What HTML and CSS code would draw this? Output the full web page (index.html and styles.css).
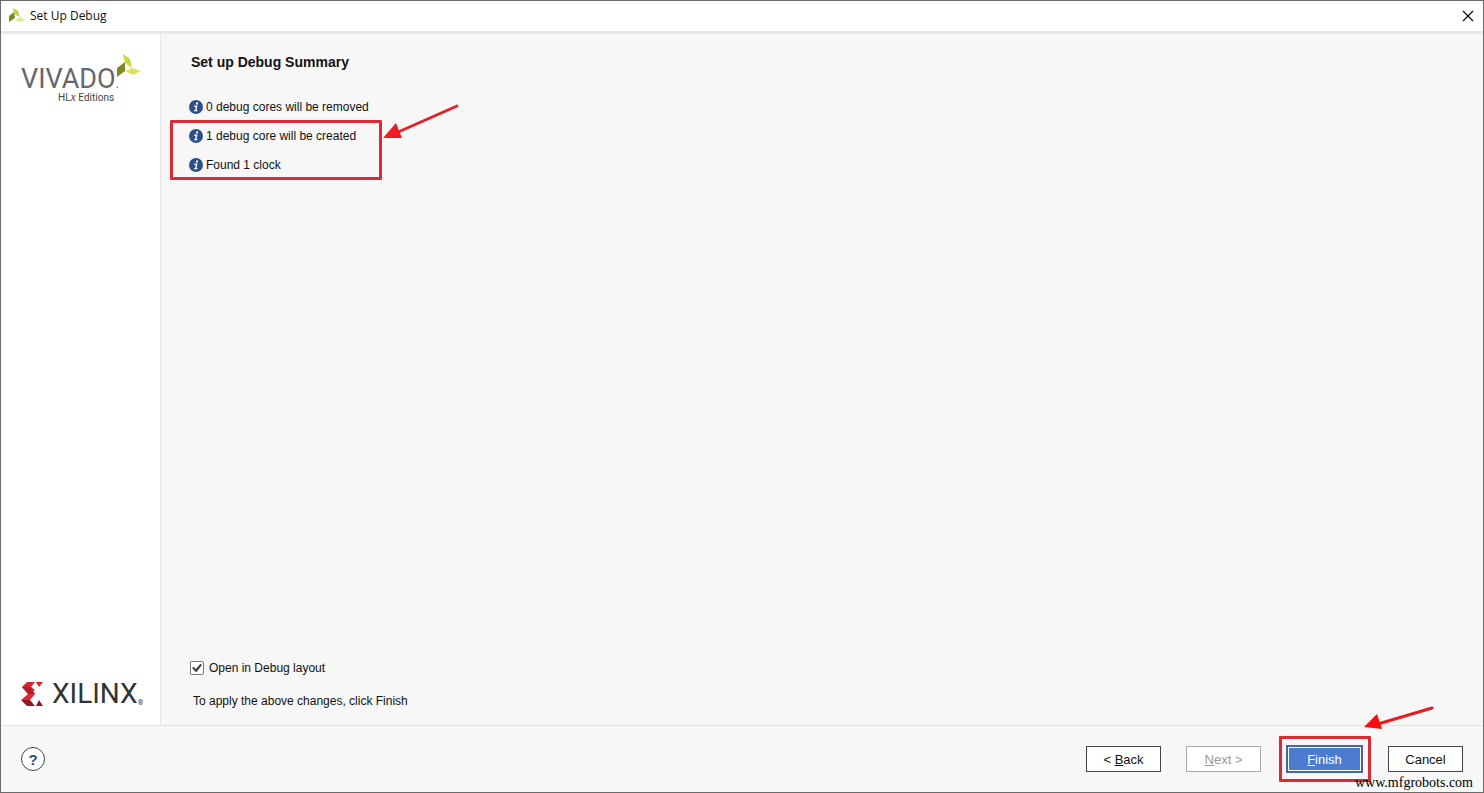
FILE: index.html
```html
<!DOCTYPE html>
<html lang="en">
<head>
    <meta charset="UTF-8">
    <meta name="viewport" content="width=device-width, initial-scale=1.0">
    <title>Set Up Debug</title>
    <link rel="stylesheet" href="styles.css">
</head>
<body>
    <header class="titlebar">
        <svg class="app-icon" viewBox="0 0 17 16">
            <path d="M1 8 L6 4 L7 10 L1 14 Z" fill="#7c8a1c"/>
            <path d="M5 0 L10 3 L12 9 L6 6 Z" fill="#c2d046"/>
            <path d="M7 12 L12 9 L17 12 L12 14 Z" fill="#e2e894"/>
        </svg>
        <span class="title">Set Up Debug</span>
        <button class="close" aria-label="Close">
            <svg viewBox="0 0 12 12"><path d="M1 1 L11 11 M11 1 L1 11" stroke="#111" stroke-width="1.3"/></svg>
        </button>
    </header>

    <div class="main">
        <aside class="sidebar">
            <div class="vivado">
                <div class="vivado-name">VIVADO<small>.</small></div>
                <div class="edition">HL<i>x</i> Editions</div>
                <svg class="leaves" viewBox="0 0 24 24">
                    <path d="M0 14 L8 8 L8 17 L0 23 Z" fill="#7f8b22"/>
                    <path d="M6 0 L13 5 L15 14 L8 9 Z" fill="#c9d63f"/>
                    <path d="M8 17 L16 14 L24 17 L16 21 Z" fill="#dbe45c"/>
                </svg>
            </div>
            <div class="xilinx">
                <svg class="xilinx-mark" viewBox="0 0 22 24">
                    <path d="M6 0 H14 L10 5 L14 8 L7 12 L1 5 Z" fill="#d8232f"/>
                    <path d="M15 0 H22 L18 5 Z" fill="#d8232f"/>
                    <path d="M1 5 H10 L14 12 H7 Z" fill="#b51f2a"/>
                    <path d="M7 12 H14 L9 18 L0 18 Z" fill="#df2935"/>
                    <path d="M0 18 L9 18 L14 24 H6 Z" fill="#8e1b22"/>
                    <path d="M18 18 L22 24 H15 Z" fill="#8e1b22"/>
                </svg>
                <span class="xilinx-name">XILINX</span><span class="reg">®</span>
            </div>
        </aside>

        <main class="content">
            <h1>Set up Debug Summary</h1>
            <ul class="summary">
                <li><svg class="info" viewBox="0 0 14 14"><circle cx="7" cy="7" r="7" fill="#2d4f86"/><path d="M7.2 2.6h2l-.4 1.8h-2z M5.3 5.5h3.2l-1 4.5h1l-.3 1.2H5l.3-1.2h.8l.7-3.3H5z" fill="#fff"/></svg>0 debug cores will be removed</li>
                <li class="marked"><svg class="info" viewBox="0 0 14 14"><circle cx="7" cy="7" r="7" fill="#2d4f86"/><path d="M7.2 2.6h2l-.4 1.8h-2z M5.3 5.5h3.2l-1 4.5h1l-.3 1.2H5l.3-1.2h.8l.7-3.3H5z" fill="#fff"/></svg>1 debug core will be created
                    <span class="box box-list"></span>
                    <svg class="arrow arrow-list" viewBox="0 0 78 38"><path d="M75 3 L14 30" stroke="#e0222b" stroke-width="3" stroke-linecap="round"/><path d="M1 35 L14 20 L20 35 Z" fill="#f01c24"/></svg>
                </li>
                <li><svg class="info" viewBox="0 0 14 14"><circle cx="7" cy="7" r="7" fill="#2d4f86"/><path d="M7.2 2.6h2l-.4 1.8h-2z M5.3 5.5h3.2l-1 4.5h1l-.3 1.2H5l.3-1.2h.8l.7-3.3H5z" fill="#fff"/></svg>Found 1 clock</li>
            </ul>
            <div class="bottom">
                <label class="option"><input type="checkbox" checked>Open in Debug layout</label>
                <p>To apply the above changes, click Finish</p>
            </div>
        </main>
    </div>

    <footer class="footer">
        <button class="help">?</button>
        <div class="buttons">
            <button class="btn">&lt; <u>B</u>ack</button>
            <button class="btn" disabled><u>N</u>ext &gt;</button>
            <div class="marked">
                <button class="btn primary"><u>F</u>inish</button>
                <span class="box box-finish"></span>
                <svg class="arrow arrow-finish" viewBox="0 0 72 28"><path d="M69 3 L15 19" stroke="#e81c20" stroke-width="3" stroke-linecap="round"/><path d="M1 22 L14 9 L19 24 Z" fill="#fb0d0d"/></svg>
            </div>
            <button class="btn">Cancel</button>
        </div>
        <span class="watermark">www.mfgrobots.com</span>
    </footer>
</body>
</html>
```
FILE: styles.css
```css
* {
    box-sizing: border-box;
}

body {
    margin: 0;
    height: 100vh;
    display: flex;
    flex-direction: column;
    border: 1px solid #6b6b6b;
    background-color: #f7f7f7;
    color: #111;
    font-family: "Liberation Sans", Arial, sans-serif;
    font-size: 12px;
    line-height: 16px;
    overflow: hidden;
}

button {
    font-family: inherit;
    font-size: 13px;
    padding: 0;
}

/* Title bar */
.titlebar {
    display: flex;
    align-items: center;
    height: 33px;
    padding: 0 8px 1px 7px;
    background-color: #fff;
    border-bottom: 3px solid #e8e8e8;
}

.app-icon {
    width: 17px;
    height: 16px;
    margin-right: 5px;
}

.title {
    flex: 1;
    font-family: "Open Sans", sans-serif;
    font-size: 12px;
}

.close {
    width: 14px;
    height: 14px;
    border: none;
    background: none;
    line-height: 0;
}

.close svg {
    width: 12px;
    height: 12px;
}

/* Main area */
.main {
    flex: 1;
    display: flex;
}

.sidebar {
    width: 160px;
    display: flex;
    flex-direction: column;
    justify-content: space-between;
    padding: 33px 16px 16px 20px;
    background-color: #fff;
    border-right: 1px solid #e8e8e8;
}

.vivado {
    position: relative;
    color: #66676a;
    font-family: Roboto, sans-serif;
}

.vivado-name {
    font-size: 27px;
    line-height: 25px;
}

.vivado-name small {
    font-size: 12px;
    line-height: 0;
}

.edition {
    padding-left: 37px;
    font-size: 10px;
    line-height: 12px;
    color: #444;
}

.edition i {
    font-family: "Liberation Serif", serif;
    font-size: 12px;
    line-height: 0;
}

.leaves {
    position: absolute;
    top: -13px;
    left: 96px;
    width: 24px;
    height: 24px;
}

.xilinx {
    display: flex;
    align-items: center;
    color: #333;
    font-family: Roboto, sans-serif;
}

.xilinx-mark {
    width: 22px;
    height: 24px;
    margin-right: 9px;
}

.xilinx-name {
    font-size: 28px;
    line-height: 30px;
}

.reg {
    align-self: flex-end;
    font-size: 7px;
    line-height: 12px;
}

.content {
    flex: 1;
    display: flex;
    flex-direction: column;
    padding: 20px 28px 16px;
}

h1 {
    margin: 0 0 29px 2px;
    font-size: 14px;
    line-height: 16px;
}

.summary {
    list-style-type: none;
    margin: 0;
    padding: 0;
}

.summary li {
    display: flex;
    align-items: center;
    gap: 3px;
    margin-bottom: 13px;
}

.info {
    width: 14px;
    height: 14px;
}

.bottom {
    margin-top: auto;
}

.option {
    display: flex;
    align-items: center;
    gap: 5px;
    margin-left: 1px;
}

.option input {
    appearance: none;
    width: 14px;
    height: 14px;
    margin: 0;
    border: 1px solid #777;
    border-radius: 2px;
    background-color: #fff;
}

.option input:checked {
    display: grid;
    place-items: center;
}

.option input:checked::before {
    content: "";
    width: 10px;
    height: 9px;
    background-color: #444;
    clip-path: polygon(0 50%, 18% 36%, 38% 62%, 84% 4%, 100% 18%, 42% 100%);
}

.bottom p {
    margin: 17px 0 0 4px;
}

/* Red marks */
.marked {
    position: relative;
}

.box {
    position: absolute;
    border: 3px solid #dc2a35;
    border-radius: 1px;
    pointer-events: none;
}

.box-list {
    top: -8px;
    left: -19px;
    width: 212px;
    height: 60px;
}

.box-finish {
    top: -9px;
    left: -7px;
    width: 92px;
    height: 46px;
}

.arrow {
    position: absolute;
}

.arrow-list {
    top: -25px;
    left: 193px;
    width: 78px;
    height: 38px;
}

.arrow-finish {
    top: -40px;
    left: 77px;
    width: 72px;
    height: 28px;
}

/* Footer */
.footer {
    position: relative;
    display: flex;
    align-items: center;
    justify-content: space-between;
    height: 67px;
    padding: 0 20px;
    border-top: 1px solid #e2e2e2;
}

.help {
    width: 24px;
    height: 24px;
    border: 1px solid #444;
    border-radius: 50%;
    background-color: #fff;
    color: #2d4f86;
    font-size: 15px;
    font-weight: bold;
}

.buttons {
    display: flex;
    align-items: center;
    gap: 25px;
}

.btn {
    width: 75px;
    height: 26px;
    border: 1px solid #444;
    background-color: #fff;
    color: #111;
}

.btn:disabled {
    border-color: #aaa;
    color: #999;
}

.primary {
    display: block;
    width: 77px;
    height: 28px;
    border: 2px solid #42699f;
    background-color: #4d7bcf;
    box-shadow: inset 0 0 0 1px #fff;
    color: #fff;
}

.watermark {
    position: absolute;
    right: 10px;
    bottom: 1px;
    color: #000;
    font-family: "Liberation Serif", serif;
    font-size: 14px;
}
```
